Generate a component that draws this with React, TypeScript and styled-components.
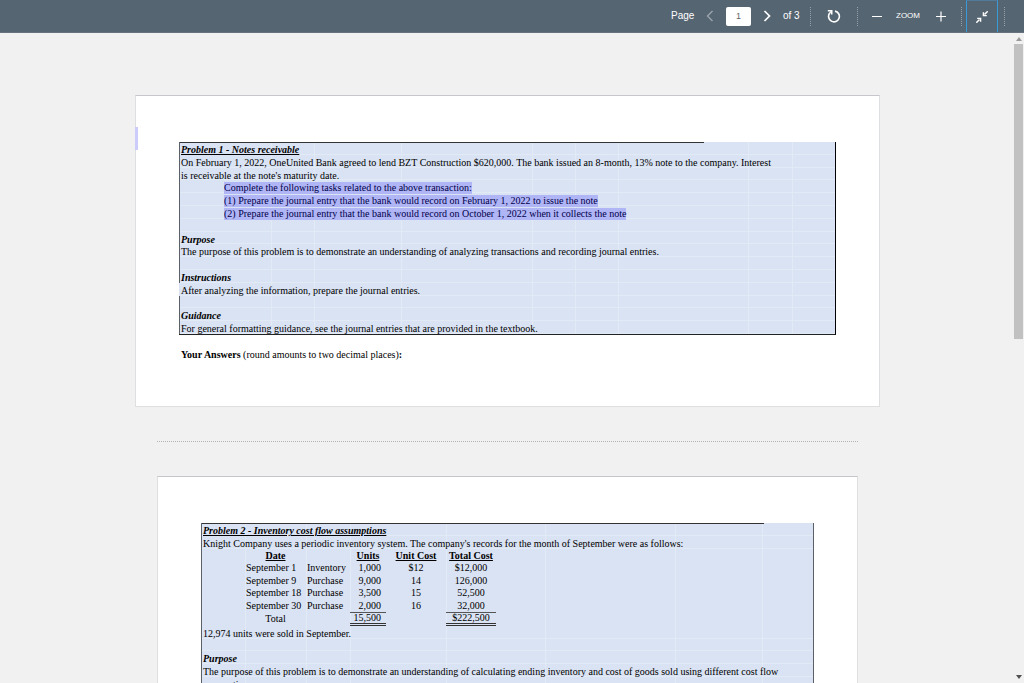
import React from 'react';
import styled, { createGlobalStyle, css } from 'styled-components';

const GlobalStyle = createGlobalStyle`
  *, *::before, *::after { box-sizing: border-box; }
  body { margin: 0; background: #f1f1f1; }
`;

const SANS = "'Liberation Sans', Arial, sans-serif";
const SERIF = "'Liberation Serif', 'Times New Roman', serif";

const Viewer = styled.div`
  display: flex;
  flex-direction: column;
  height: 100vh;
  overflow: hidden;
`;

const Toolbar = styled.header`
  display: flex;
  flex: none;
  align-items: center;
  justify-content: flex-end;
  height: 33px;
  padding-right: 19px;
  background: #566572;
  border-bottom: 1px solid #66737f;
  color: #fff;
  font: 10px/12px ${SANS};
`;

const PageLabel = styled.label`
  width: 29px;
`;

const PageCount = styled.span`
  width: 33px;
  padding-left: 6px;
  white-space: nowrap;
`;

const ZoomLabel = styled.span`
  display: flex;
  justify-content: center;
  width: 24px;
  font-size: 8px;
`;

const PageInput = styled.input`
  width: 25px;
  height: 19px;
  margin: 0 6px;
  padding: 0;
  border: 0;
  border-radius: 2px;
  background: #fff;
  color: #666;
  font: 9px/19px ${SANS};
  text-align: center;
`;

const IconButton = styled.button<{ $width: number; $dim?: boolean; $active?: boolean }>`
  display: flex;
  flex: none;
  align-items: center;
  justify-content: center;
  width: ${p => p.$width}px;
  height: 32px;
  padding: 0;
  border: 0;
  background: none;
  color: ${p => (p.$dim ? '#9aa4ad' : '#fff')};
  ${p => p.$active && css`
    margin: 0 6px 0 4px;
    border: solid #3a9ad9;
    border-width: 1px 1px 0;
    border-top-color: #50799a;
  `}
`;

const Separator = styled.span`
  width: 1px;
  height: 19px;
  border-left: 1px dotted #97a1aa;
`;

const Body = styled.div`
  display: flex;
  flex: 1;
  min-height: 0;
`;

const Pages = styled.main`
  display: flex;
  flex: 1;
  flex-direction: column;
  align-items: center;
  min-width: 0;
  padding-top: 62px;
  overflow: hidden;
`;

const Scrollbar = styled.div`
  display: flex;
  flex: none;
  flex-direction: column;
  justify-content: space-between;
  width: 10px;
  margin-left: -1px;
  padding: 4px 0;

  svg { margin-left: 2px; }
`;

const Thumb = styled.div`
  flex: none;
  width: 9px;
  height: 46%;
  margin: 3px 0 auto;
  background: #c1c1c1;
`;

const Sheet = styled.article<{ $width: number }>`
  position: relative;
  flex: none;
  width: 100%;
  max-width: ${p => p.$width}px;
  padding: 46px 43px 45px;
  border: 1px solid #dedfe1;
  border-top-color: #c6c7cb;
  background: #fff;
  color: #000;
  font: 10px/13px ${SERIF};
`;

const SelectionMark = styled.span`
  position: absolute;
  top: 31px;
  left: -1px;
  width: 3px;
  height: 23px;
  background: #ccccfb;
`;

const PageBreak = styled.hr`
  flex: none;
  width: 100%;
  max-width: 701px;
  margin: 34px 0;
  border: 0;
  border-top: 1px dotted #b4b4b4;
`;

const columnLines = (lines: number[]) =>
  lines.map(x => `linear-gradient(#e2eaf6, #e2eaf6) ${x}px 0 / 1px 100% no-repeat`).join(', ');

const Panel = styled.section<{ $height: number; $rows: number; $lines: number[]; $closed?: boolean }>`
  display: grid;
  grid-template-columns: minmax(0, 1fr);
  grid-template-rows: repeat(${p => p.$rows}, minmax(0, 1fr));
  height: ${p => p.$height}px;
  background: ${p => columnLines(p.$lines)}, #dae3f3;
  border-right: 1px solid ${p => (p.$closed ? '#000' : '#5c6068')};
  border-bottom: ${p => (p.$closed ? '1px solid #222' : '0')};
`;

const rowFrame = css<{ $open?: boolean; $topRule?: string }>`
  padding: 1px 0 0 1px;
  border-left: 1px solid ${p => (p.$open ? '#dae3f3' : '#5c6068')};
  background: ${p => (p.$topRule ? `linear-gradient(#333, #333) 0 0 / ${p.$topRule} 1px no-repeat, ` : '')}
    linear-gradient(#e2eaf6, #e2eaf6) 0 100% / 100% 1px no-repeat;
  white-space: nowrap;
`;

const Row = styled.p<{ $open?: boolean; $topRule?: string }>`
  margin: 0;
  ${rowFrame}
`;

const Heading = styled.h2<{ $topRule?: string; $underlined?: boolean }>`
  margin: 0;
  font: italic bold 10px/13px ${SERIF};
  text-decoration: ${p => (p.$underlined ? 'underline' : 'none')};
  ${rowFrame}
`;

const Marked = styled.mark`
  display: inline-block;
  height: 12px;
  margin-left: 43px;
  background: #b0b5f5;
  color: #00004a;
  line-height: 12px;
`;

const Answers = styled.p`
  margin: 13px 0 0 2px;
`;

const TableRows = styled.div`
  grid-row: span 6;
  padding: 1px 0 0 43px;
  border-left: 1px solid #5c6068;
`;

const Ledger = styled.table`
  width: 251px;
  height: 100%;
  table-layout: fixed;
  border-spacing: 0;
  line-height: 10px;
  white-space: nowrap;

  th, td { height: 12px; padding: 0; text-align: center; }
  th { text-decoration: underline; }
`;

const Cell = styled.td<{ $align?: 'left' | 'right'; $sum?: boolean }>`
  && {
    padding-left: ${p => (p.$align === 'left' ? '1px' : '0')};
    padding-right: ${p => (p.$align === 'right' ? '5px' : '0')};
    text-align: ${p => p.$align ?? 'center'};
  }
  ${p => p.$sum && css`
    border-top: 1px solid #555;
    border-bottom: 3px double #333;
    line-height: 9px;
  `}
`;

const records = [
  ['September 1', 'Inventory', '1,000', '$12', '$12,000'],
  ['September 9', 'Purchase', '9,000', '14', '126,000'],
  ['September 18', 'Purchase', '3,500', '15', '52,500'],
  ['September 30', 'Purchase', '2,000', '16', '32,000'],
];

const Icon = ({ size, children }: { size: number; children: React.ReactNode }) => (
  <svg width={size} height={size} viewBox={`0 0 ${size} ${size}`} fill="none" stroke="currentColor" strokeWidth="1.4" aria-hidden="true">
    {children}
  </svg>
);

export default function App() {
  return (
    <Viewer>
      <GlobalStyle />
      <Toolbar>
        <PageLabel htmlFor="page">Page</PageLabel>
        <IconButton $width={20} $dim aria-label="Previous page">
          <Icon size={12}><path d="M8.5 1 3.5 6l5 5" /></Icon>
        </IconButton>
        <PageInput id="page" defaultValue="1" />
        <IconButton $width={20} aria-label="Next page">
          <Icon size={12}><path d="m3.5 1 5 5-5 5" strokeWidth="1.7" /></Icon>
        </IconButton>
        <PageCount>of 3</PageCount>
        <Separator />
        <IconButton $width={46} aria-label="Rotate">
          <Icon size={14}>
            <path d="M8 2.1a5.400 5.400 0 1 1-5.300 2" strokeWidth="1.6" />
            <path d="M.8 1.700h3.900v3.900" strokeWidth="1.6" />
            <path d="m4.500 1.900-2 2.400" strokeWidth="1.200" />
          </Icon>
        </IconButton>
        <Separator />
        <IconButton $width={38} aria-label="Zoom out">
          <Icon size={12}><path d="M1 6.5h10" strokeWidth="1" /></Icon>
        </IconButton>
        <ZoomLabel>ZOOM</ZoomLabel>
        <IconButton $width={41} aria-label="Zoom in">
          <Icon size={12}><path d="M1 6.5h10M6 1.5v10" strokeWidth="1.2" /></Icon>
        </IconButton>
        <Separator />
        <IconButton $width={32} $active aria-label="Exit full screen">
          <Icon size={12}>
            <path d="M11.7.3 8.500 3.500M.3 11.700l3.200-3.200" strokeWidth="1.5" />
            <path d="M7.400 1.200v3.400h3.400M4.600 10.800V7.400H1.200" strokeWidth="1.400" />
          </Icon>
        </IconButton>
        <Separator />
      </Toolbar>
      <Body>
        <Pages>
          <Sheet $width={745}>
            <SelectionMark />
            <Panel $height={193} $rows={15} $closed $lines={[92, 135, 222, 353, 396, 439, 569, 613]}>
              <Heading $underlined $topRule="80%">Problem 1 - Notes receivable</Heading>
              <Row>On February 1, 2022, OneUnited Bank agreed to lend BZT Construction $620,000. The bank issued an 8-month, 13% note to the company. Interest</Row>
              <Row>is receivable at the note's maturity date.</Row>
              <Row><Marked>Complete the following tasks related to the above transaction:</Marked></Row>
              <Row><Marked>(1) Prepare the journal entry that the bank would record on February 1, 2022 to issue the note</Marked></Row>
              <Row><Marked>(2) Prepare the journal entry that the bank would record on October 1, 2022 when it collects the note</Marked></Row>
              <Row />
              <Heading>Purpose</Heading>
              <Row>The purpose of this problem is to demonstrate an understanding of analyzing transactions and recording journal entries.</Row>
              <Row />
              <Heading>Instructions</Heading>
              <Row $open>After analyzing the information, prepare the journal entries.</Row>
              <Row />
              <Heading>Guidance</Heading>
              <Row>For general formatting guidance, see the journal entries that are provided in the textbook.</Row>
            </Panel>
            <Answers><b>Your Answers</b> (round amounts to two decimal places)<b>:</b></Answers>
          </Sheet>
          <PageBreak />
          <Sheet $width={701}>
            <Panel $height={167} $rows={13} $lines={[44, 105, 149, 245, 344, 474, 561]}>
              <Heading $underlined $topRule="92%">Problem 2 - Inventory cost flow assumptions</Heading>
              <Row>Knight Company uses a periodic inventory system. The company's records for the month of September were as follows:</Row>
              <TableRows>
                <Ledger>
                  <colgroup>
                    <col width="61" /><col width="44" /><col width="36" /><col width="60" /><col width="50" />
                  </colgroup>
                  <thead>
                    <tr><th>Date</th><td /><th>Units</th><th>Unit Cost</th><th>Total Cost</th></tr>
                  </thead>
                  <tbody>
                    {records.map(([date, kind, units, cost, total]) => (
                      <tr key={date}>
                        <Cell $align="left">{date}</Cell>
                        <Cell $align="left">{kind}</Cell>
                        <Cell $align="right">{units}</Cell>
                        <Cell>{cost}</Cell>
                        <Cell>{total}</Cell>
                      </tr>
                    ))}
                    <tr>
                      <Cell>Total</Cell>
                      <Cell />
                      <Cell $align="right" $sum>15,500</Cell>
                      <Cell />
                      <Cell $sum>$222,500</Cell>
                    </tr>
                  </tbody>
                </Ledger>
              </TableRows>
              <Row>12,974 units were sold in September.</Row>
              <Row />
              <Heading>Purpose</Heading>
              <Row>The purpose of this problem is to demonstrate an understanding of calculating ending inventory and cost of goods sold using different cost flow</Row>
              <Row>assumptions.</Row>
            </Panel>
          </Sheet>
        </Pages>
        <Scrollbar aria-hidden="true">
          <svg width="6" height="4" viewBox="0 0 6 4"><path d="M0 4 3 0l3 4z" fill="#999" /></svg>
          <Thumb />
          <svg width="6" height="4" viewBox="0 0 6 4"><path d="M0 0h6L3 4z" fill="#505050" /></svg>
        </Scrollbar>
      </Body>
    </Viewer>
  );
}
